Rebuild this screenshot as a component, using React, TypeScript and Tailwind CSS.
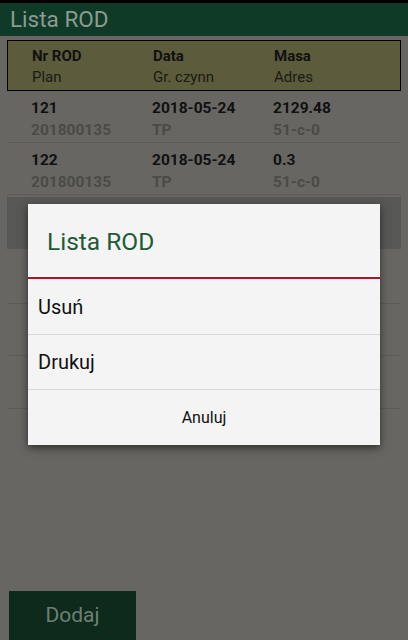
import React from 'react'

const ROWS = [
  { nr: '121', plan: '201800135', data: '2018-05-24', gr: 'TP', masa: '2129.48', adres: '51-c-0' },
  { nr: '122', plan: '201800135', data: '2018-05-24', gr: 'TP', masa: '0.3', adres: '51-c-0' },
]

function Cell({ top, bottom, head }: { top: string; bottom: string; head?: boolean }) {
  return (
    <div className="flex w-[121px] flex-col">
      <span className={head ? 'text-[15px] font-bold leading-[21px] text-[#111]' : 'text-[15.5px] font-bold leading-[22px] text-[#111]'}>
        {top}
      </span>
      <span
        className={
          head
            ? 'text-[15px] leading-[21px] text-[#1a1a14]'
            : 'text-[15.5px] font-bold leading-[22px] text-[#4b4a47]'
        }
      >
        {bottom}
      </span>
    </div>
  )
}

export default function App() {
  return (
    <div
      className="relative flex h-[640px] w-[408px] flex-col overflow-hidden bg-[#676662]"
      style={{ fontFamily: 'Roboto, "Noto Sans", sans-serif' }}
    >
      <div className="h-[3px] bg-black" />
      <div className="flex h-[33px] items-center bg-[#0f3a27] px-[10px]">
        <span className="text-[22.5px] leading-none text-[#8c9a91]">Lista ROD</span>
      </div>

      <div className="mx-[7px] mt-[4px] flex h-[51px] items-center border border-black bg-[#5c5b3b] pl-[24px] pt-[3px]">
        <Cell top="Nr ROD" bottom="Plan" head />
        <Cell top="Data" bottom="Gr. czynn" head />
        <Cell top="Masa" bottom="Adres" head />
      </div>

      <div className="mx-[7px] flex flex-col">
        {ROWS.map((r) => (
          <div key={r.nr} className="flex h-[52px] items-center border-b border-[#5c5b57] pl-[24px] pt-[4px]">
            <Cell top={r.nr} bottom={r.plan} />
            <Cell top={r.data} bottom={r.gr} />
            <Cell top={r.masa} bottom={r.adres} />
          </div>
        ))}
        <div className="mt-[2px] h-[52px] bg-[#575756]" />
        <div className="h-[55px] border-b border-[#5c5b57]" />
        <div className="h-[52px] border-b border-[#5c5b57]" />
        <div className="h-[53px] border-b border-[#5c5b57]" />
      </div>

      <div className="mt-auto ml-[9px] flex h-[49px] w-[127px] items-center justify-center bg-[#0d2a1c]">
        <span className="text-[21px] text-[#6f7f74]">Dodaj</span>
      </div>

      <div className="absolute left-[28px] top-[204px] flex w-[352px] flex-col bg-[#f4f4f4] shadow-[0_3px_8px_rgba(0,0,0,0.55)]">
        <div className="flex h-[73px] items-center pl-[19px] pt-[3px]">
          <span className="text-[24.5px] text-[#1f5a39]">Lista ROD</span>
        </div>
        <div className="h-[2px] bg-[#a3182c]" />
        <div className="flex h-[56px] items-center border-b border-[#d9d9d9] pl-[10px]">
          <span className="text-[20px] text-[#111]">Usuń</span>
        </div>
        <div className="flex h-[55px] items-center border-b border-[#d9d9d9] pl-[10px]">
          <span className="text-[20px] text-[#111]">Drukuj</span>
        </div>
        <div className="flex h-[55px] items-center justify-center">
          <span className="text-[16px] text-[#111]">Anuluj</span>
        </div>
      </div>
    </div>
  )
}
